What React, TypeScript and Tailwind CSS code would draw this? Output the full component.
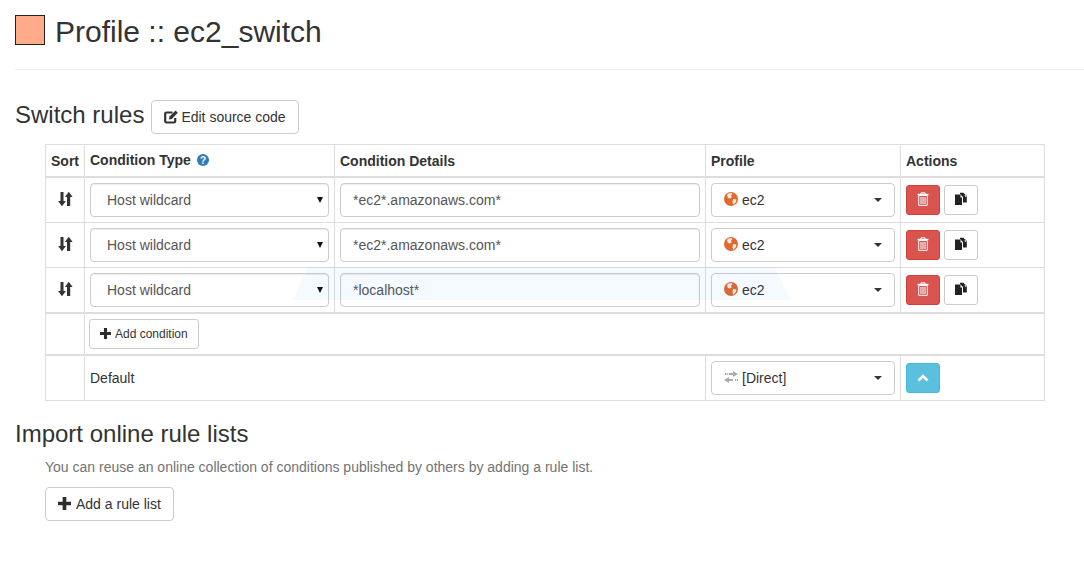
function SortIcon() {
  return (
    <svg width="16" height="16" viewBox="0 0 16 16" fill="#333">
      <path d="M3.500 1h3v9h2.400L5 15.200 1.100 10h2.400z" />
      <path d="M10 6H7.900l3.850-5.200L15.600 6h-2.400v9H10z" />
    </svg>
  )
}

function GlobeIcon() {
  return (
    <svg width="14" height="14" viewBox="0 0 14 14" className="-mt-[2px] shrink-0">
      <circle cx="7" cy="7" r="7" fill="#e0692f" />
      <path d="M3.800 1.800 7.500 1l1 1.300-1.500 1.200.8 1.700-1.800 1.300-2-.6L3 3.500zM9 7l3.500.6-.8 2.600-2.200 2.500-1-2.300z" fill="#fff" opacity=".85" />
    </svg>
  )
}

function TrashIcon() {
  return (
    <svg width="12" height="14" viewBox="0 0 12 14" fill="none" stroke="#fff" className="-mt-[2px]">
      <path d="M.5 2.500h11" strokeWidth="1.400" />
      <path d="M4 2V.8h4V2" strokeWidth="1" />
      <path d="M1.700 3.500v9.800h8.600V3.500z" strokeWidth="1" />
      <path d="M4 5v7M6 5v7M8 5v7" strokeWidth="1" />
    </svg>
  )
}

function CopyIcon() {
  return (
    <svg width="14" height="14" viewBox="0 0 14 14" fill="#222" className="-mt-[2px]">
      <path d="M1 2.500h5.500V5.500H8V13H1z" />
      <path d="M6 .8h3.500L10 3.500l2.800.3V10.500H9V5L6 2z" />
      <path d="M9 .8l3.800 3H9z" />
      <path d="M10.800 3.300h1.600v1.400h-1.600z" fill="#fff" />
    </svg>
  )
}

function EditIcon() {
  return (
    <svg width="14" height="14" viewBox="0 0 14 14" fill="none" className="shrink-0">
      <path d="M8.500 2.500H2.500a1.300 1.300 0 0 0-1.300 1.300v7.400a1.300 1.300 0 0 0 1.300 1.300h7.400a1.300 1.300 0 0 0 1.300-1.300V8" stroke="#333" strokeWidth="2.200" />
      <path d="M11.600.6 13.800 2.800 7.800 8.900l-2.900.6.600-2.900z" fill="#333" />
    </svg>
  )
}

function PlusIcon({ size }: { size: number }) {
  return (
    <svg width={size} height={size} viewBox="0 0 12 12" fill="#2d2d2d" className="shrink-0">
      <path d="M4.300 0h3.400v4.300H12v3.400H7.700V12H4.300V7.700H0V4.300h4.300z" />
    </svg>
  )
}

function TransferIcon() {
  return (
    <svg width="14" height="12" viewBox="0 0 14 12" fill="#aaa" className="-mt-[2px] shrink-0">
      <path d="M9 0l5 3-5 3V4H5V2h4zM1 2h1.500v2H1zM3.200 2h1v2h-1z" />
      <path d="M5 6v2h4v2H5v2L0 9zM11 8h1v2h-1zM12.800 8H14v2h-1.200z" />
    </svg>
  )
}

function Caret() {
  return <span className="ml-auto h-0 w-0 border-x-[4px] border-t-[4px] border-x-transparent border-t-[#333]" />
}

function ProfileSelect({ direct }: { direct?: boolean }) {
  return (
    <div className="flex h-[34px] w-[184px] items-center gap-[4px] rounded border border-[#ccc] bg-white pl-[12px] pr-[12px] text-[#333]">
      {direct ? <TransferIcon /> : <GlobeIcon />}
      <span>{direct ? '[Direct]' : 'ec2'}</span>
      <Caret />
    </div>
  )
}

function ConditionRow({ value }: { value: string }) {
  return (
    <tr>
      <td className="border border-[#ddd] p-[5px] text-center align-top">
        <div className="flex justify-center pt-[8px]">
          <SortIcon />
        </div>
      </td>
      <td className="border border-[#ddd] p-[5px]">
        <div className="relative">
          <select
            defaultValue="Host wildcard"
            className="block h-[34px] w-full appearance-none rounded border border-[#ccc] bg-white pl-[16px] pr-[20px] text-[#555] shadow-[inset_0_1px_1px_rgba(0,0,0,0.075)]"
          >
            <option>Host wildcard</option>
          </select>
          <span className="pointer-events-none absolute right-[6px] top-[14px] h-0 w-0 border-x-[3.500px] border-t-[6px] border-x-transparent border-t-[#111]" />
        </div>
      </td>
      <td className="border border-[#ddd] p-[5px]">
        <input
          defaultValue={value}
          className="block h-[34px] w-full rounded border border-[#ccc] bg-white px-[12px] text-[#555] shadow-[inset_0_1px_1px_rgba(0,0,0,0.075)]"
        />
      </td>
      <td className="border border-[#ddd] p-[5px]">
        <ProfileSelect />
      </td>
      <td className="border border-[#ddd] p-[5px]">
        <div className="flex gap-[4px]">
          <button className="flex h-[30px] w-[34px] items-center justify-center rounded-[3px] border border-[#d43f3a] bg-[#d9534f]">
            <TrashIcon />
          </button>
          <button className="flex h-[30px] w-[34px] items-center justify-center rounded-[3px] border border-[#ccc] bg-white">
            <CopyIcon />
          </button>
        </div>
      </td>
    </tr>
  )
}

export default function App() {
  return (
    <div className="relative h-[563px] w-[1084px] overflow-hidden bg-white pl-[15px] font-['Liberation_Sans',Arial,sans-serif] text-[14px] leading-[20px] text-[#333]">
      <div className="flex h-[70px] items-start gap-[10px] border-b border-[#eee] pt-[15px]">
        <span className="h-[30px] w-[30px] border border-[#222] bg-[#ffaa88]" />
        <h1 className="text-[30px] leading-[33px]">Profile :: ec2_switch</h1>
      </div>

      <div className="mt-[30px] flex h-[34px] items-center gap-[7px]">
        <h3 className="mb-[4px] text-[24px] leading-[26px]">Switch rules</h3>
        <button className="flex h-[34px] w-[148px] items-center gap-[3px] rounded border border-[#ccc] bg-white pl-[12px]">
          <EditIcon />
          Edit source code
        </button>
      </div>

      <div className="relative ml-[30px] mt-[10px] w-[1000px]">
        <table className="w-[1000px] table-fixed border-collapse">
          <colgroup>
            <col className="w-[39px]" />
            <col className="w-[250px]" />
            <col className="w-[371px]" />
            <col className="w-[195px]" />
            <col className="w-[144px]" />
          </colgroup>
          <thead>
            <tr className="h-[32px] border-b-2 border-[#ddd] text-left">
              <th className="border border-b-2 border-[#ddd] px-[5px] pt-[2px] font-bold">Sort</th>
              <th className="border border-b-2 border-[#ddd] px-[5px] font-bold">
                <span className="flex items-center gap-[6px]">
                  Condition Type
                  <svg width="12" height="12" viewBox="0 0 12 12">
                    <circle cx="6" cy="6" r="6" fill="#337ab7" />
                    <text x="6" y="9.500" textAnchor="middle" fontSize="10" fontWeight="700" fill="#fff">?</text>
                  </svg>
                </span>
              </th>
              <th className="border border-b-2 border-[#ddd] px-[5px] pt-[2px] font-bold">Condition Details</th>
              <th className="border border-b-2 border-[#ddd] px-[5px] pt-[2px] font-bold">Profile</th>
              <th className="border border-b-2 border-[#ddd] px-[5px] pt-[2px] font-bold">Actions</th>
            </tr>
          </thead>
          <tbody>
            <ConditionRow value="*ec2*.amazonaws.com*" />
            <ConditionRow value="*ec2*.amazonaws.com*" />
            <ConditionRow value="*localhost*" />
          </tbody>
          <tbody className="border-t-2 border-[#ddd]">
            <tr>
              <td className="border border-t-2 border-[#ddd] p-[5px]" />
              <td colSpan={4} className="border border-t-2 border-b-2 border-[#ddd] p-[5px]">
                <button className="-ml-px flex h-[30px] items-center gap-[4px] rounded-[3px] border border-[#ccc] bg-white px-[10px] text-[12px] leading-[18px]">
                  <PlusIcon size={11} />
                  Add condition
                </button>
              </td>
            </tr>
          </tbody>
          <tbody className="border-t-2 border-[#ddd]">
            <tr>
              <td className="border border-t-2 border-[#ddd] p-[5px]" />
              <td colSpan={2} className="border border-t-2 border-[#ddd] p-[5px]">Default</td>
              <td className="border border-t-2 border-[#ddd] p-[5px]">
                <ProfileSelect direct />
              </td>
              <td className="border border-t-2 border-[#ddd] p-[5px]">
                <button className="flex h-[30px] w-[34px] items-center justify-center rounded-[3px] border border-[#46b8da] bg-[#5bc0de]">
                  <svg width="12" height="8" viewBox="0 0 12 8" fill="none" stroke="#fff" strokeWidth="2.600">
                    <path d="M1.500 6.500 6 2l4.500 4.500" />
                  </svg>
                </button>
              </td>
            </tr>
          </tbody>
        </table>
        {/* faint watermark lying over the last rule row */}
        <div className="pointer-events-none absolute left-[248px] top-[123px] h-[33px] w-[497px] bg-[rgba(0,130,255,0.045)] [clip-path:polygon(3%_0,97%_0,100%_100%,0_100%)]" />
      </div>

      <h3 className="mt-[20px] text-[24px] leading-[26px]">Import online rule lists</h3>
      <div className="ml-[30px]">
        <p className="mt-[10px] text-[#737373]">
          You can reuse an online collection of conditions published by others by adding a rule list.
        </p>
        <button className="mt-[10px] flex h-[34px] items-center gap-[5px] rounded border border-[#ccc] bg-white px-[12px]">
          <PlusIcon size={13} />
          Add a rule list
        </button>
      </div>
    </div>
  )
}
